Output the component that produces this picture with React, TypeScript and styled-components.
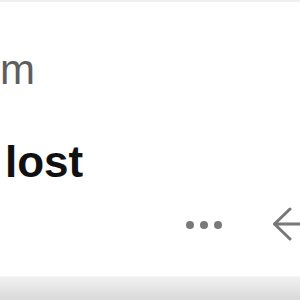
import React from "react";
import styled, { createGlobalStyle } from "styled-components";

const Global = createGlobalStyle`
  html, body { margin: 0; padding: 0; background: #ffffff; }
  body { font-family: "Liberation Sans", Arial, sans-serif; }
`;

const Frame = styled.div`
  width: 300px;
  height: 300px;
  overflow: hidden;
  background: #ffffff;
  display: flex;
  flex-direction: column;
`;

const TopStrip = styled.div`
  height: 2px;
  flex-shrink: 0;
  background: #efefef;
`;

const Subtitle = styled.div`
  margin-top: 47px;
  font-size: 42px;
  line-height: 42px;
  color: #5e5e5e;
  white-space: nowrap;
`;

const Title = styled.h1`
  margin: 49px 0 0 5px;
  font-size: 44px;
  line-height: 44px;
  font-weight: 700;
  color: #111111;
  white-space: nowrap;
`;

const Actions = styled.div`
  margin-top: 25px;
  margin-left: 186px;
  height: 32px;
  display: flex;
  align-items: center;
  gap: 50px;
  flex-shrink: 0;
`;

const Dots = styled.div`
  display: flex;
  gap: 6px;
`;

const Dot = styled.span`
  width: 8px;
  height: 8px;
  border-radius: 50%;
  background: #7a7a7a;
`;

const ArrowIcon = styled.svg`
  flex-shrink: 0;
  display: block;
`;

const Spacer = styled.div`
  flex: 1;
`;

const BottomBar = styled.div`
  height: 23px;
  flex-shrink: 0;
  border-top: 1px solid #f6f6f6;
  background: linear-gradient(#f1f1f1, #d9d9d9);
`;

export default function App() {
  return (
    <>
      <Global />
      <Frame>
        <TopStrip />
        <Subtitle>m</Subtitle>
        <Title>lost</Title>
        <Actions>
          <Dots>
            <Dot />
            <Dot />
            <Dot />
          </Dots>
          <ArrowIcon width="30" height="36" viewBox="0 0 30 36" fill="none">
            <path
              d="M18 2 L2.5 17 L18 32 M2.5 17 H30"
              stroke="#777777"
              strokeWidth="3"
              strokeLinecap="round"
              strokeLinejoin="round"
            />
          </ArrowIcon>
        </Actions>
        <Spacer />
        <BottomBar />
      </Frame>
    </>
  );
}
